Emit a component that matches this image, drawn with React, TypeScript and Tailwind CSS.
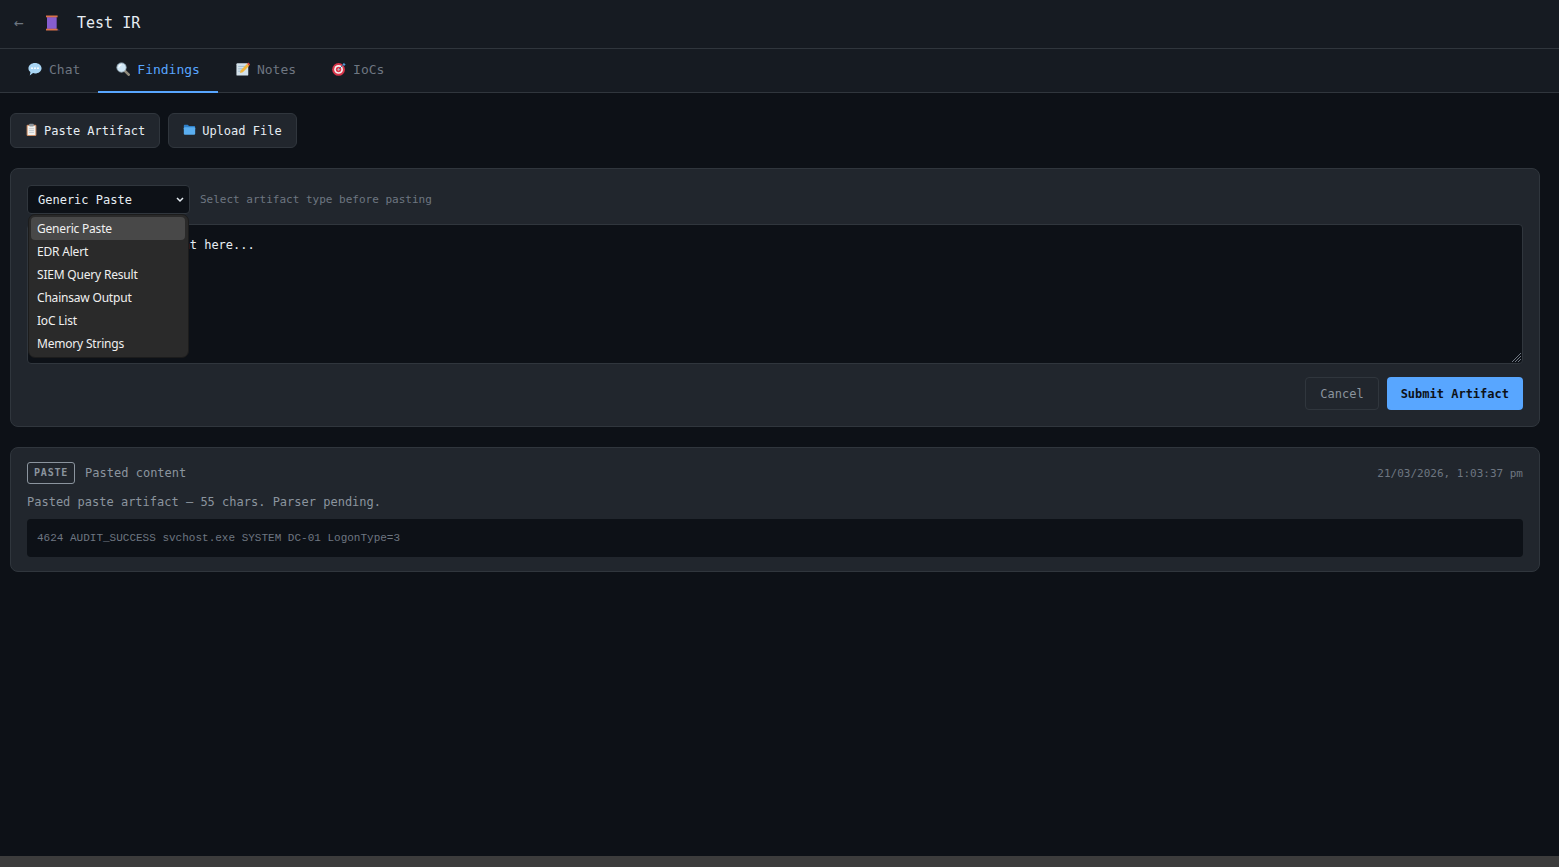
import type { ReactNode } from 'react'

const MONO = 'font-["DejaVu_Sans_Mono",monospace]'

// ---------------------------------------------------------------------------
// Emoji-style glyphs, drawn so they match the reference's emoji font
// ---------------------------------------------------------------------------

function Glyph({ size = 14, children }: { size?: number; children: ReactNode }) {
  return (
    <svg width={size} height={size} viewBox="0 0 16 16" className="mb-[2px] shrink-0">
      {children}
    </svg>
  )
}

const SpeechIcon = () => (
  <Glyph>
    <path d="M8 1c4 0 7.500 2.500 7.500 6s-3.500 6-7.500 6c-.8 0-1.500-.1-2.200-.3L2 15.500l.8-4C1.300 10.300.5 8.800.5 7 .5 3.500 4 1 8 1z" fill="#a9d6f5" />
    <circle cx="4.600" cy="7" r="1.100" fill="#ffffff" />
    <circle cx="8" cy="7" r="1.100" fill="#ffffff" />
    <circle cx="11.400" cy="7" r="1.100" fill="#ffffff" />
  </Glyph>
)

const SearchIcon = () => (
  <Glyph>
    <path d="M9.500 9.500l5 5" stroke="#8f8a7c" strokeWidth="3" strokeLinecap="round" />
    <circle cx="6.300" cy="6.300" r="5.300" fill="#cfe6f5" stroke="#9db2bf" strokeWidth="1" />
    <path d="M3.300 6c.2-1.500 1.200-2.500 2.700-2.800" stroke="#ffffff" strokeWidth="1.200" fill="none" strokeLinecap="round" />
  </Glyph>
)

const MemoIcon = () => (
  <Glyph>
    <rect x="0.500" y="1.500" width="13.500" height="14" rx="1" fill="#d3e1ea" />
    <path d="M2.500 5h9M2.500 7.800h9M2.500 10.500h5" stroke="#8fb0c6" strokeWidth="0.900" />
    <path d="M4.500 12.500l1-3.200 7.300-7.300 2.300 2.300-7.300 7.300z" fill="#f2b63c" />
    <path d="M12.800 2l1.300-1.300 2.200 2.200L15 4.300z" fill="#d9413a" />
  </Glyph>
)

const TargetIcon = () => (
  <Glyph>
    <circle cx="7.500" cy="8.500" r="7.300" fill="#d8354a" />
    <circle cx="7.500" cy="8.500" r="5" fill="#f4f1f0" />
    <circle cx="7.500" cy="8.500" r="3.100" fill="#d8354a" />
    <circle cx="7.500" cy="8.500" r="1.100" fill="#f4f1f0" />
    <path d="M7.500 8.500L13 3" stroke="#3f6f98" strokeWidth="1.100" />
    <path d="M12 2.500L14 .8l.4 1.600 1.300.3-1.900 2z" fill="#4b9bd6" />
  </Glyph>
)

const ClipboardIcon = () => (
  <Glyph size={13}>
    <rect x="2" y="2" width="12" height="14" rx="1.500" fill="#c98d66" />
    <rect x="3.300" y="3.500" width="9.400" height="11.300" fill="#f1f1ee" />
    <path d="M5 7h6M5 9.300h6M5 11.600h6" stroke="#b6bfc6" strokeWidth="0.900" />
    <rect x="5.300" y="0.800" width="5.400" height="3.400" rx="0.800" fill="#8d959c" />
  </Glyph>
)

const FolderIcon = () => (
  <Glyph size={13}>
    <path d="M1 3.500c0-.8.600-1.400 1.400-1.400h3.400l1.700 1.700h6.100c.8 0 1.400.6 1.400 1.400V8H1z" fill="#2f80c9" />
    <rect x="1" y="5.200" width="14" height="9.300" rx="1.400" fill="#5aaef0" />
  </Glyph>
)

const TABS = [
  { icon: <SpeechIcon />, label: 'Chat' },
  { icon: <SearchIcon />, label: 'Findings', active: true },
  { icon: <MemoIcon />, label: 'Notes' },
  { icon: <TargetIcon />, label: 'IoCs' },
]

const ACTIONS = [
  { icon: <ClipboardIcon />, label: 'Paste Artifact' },
  { icon: <FolderIcon />, label: 'Upload File' },
]

const ARTIFACT_TYPES = ['Generic Paste', 'EDR Alert', 'SIEM Query Result', 'Chainsaw Output', 'IoC List', 'Memory Strings']

function TypeMenu() {
  return (
    <div className="absolute top-[29px] left-[1px] z-10 w-[161px] rounded-[7px] border border-[#1c1c1c] bg-[#2a2a2a] py-[2px] pr-[3px] pl-[2px] font-['Noto_Sans',sans-serif] text-[12px] text-[#f0f0f0]">
      {ARTIFACT_TYPES.map((type, i) => (
        <div
          key={type}
          className={`flex h-[23px] items-center rounded-[4px] px-[6px] tracking-[-0.2px] ${i === 0 ? 'bg-[#484848]' : ''}`}
        >
          {type}
        </div>
      ))}
    </div>
  )
}

export default function App() {
  return (
    <div className={`flex h-screen flex-col overflow-hidden bg-[#0d1117] ${MONO}`}>
      {/* Header */}
      <header className="flex h-[49px] shrink-0 items-center border-b border-[#30363d] bg-[#161b22] pb-[2px] pl-[14px]">
        <span className="w-[31px] text-[16px] text-[#6e7681]">←</span>
        <span className="w-[32px]">
          <svg width="16" height="16" viewBox="0 0 16 16">
            <path d="M11 14.500c1.500.7 2.500.2 3.500.8" stroke="#3d3566" strokeWidth="1" fill="none" />
            <rect x="2" y="2" width="9.600" height="12" fill="#7a4fc4" />
            <path d="M2 4h9.600M2 6h9.600M2 8h9.600M2 10h9.600M2 12h9.600" stroke="#9a74e0" strokeWidth="0.800" />
            <rect x="1" y="0.500" width="11.600" height="1.800" fill="#d9734a" />
            <rect x="1" y="13.700" width="11.600" height="1.800" fill="#d9734a" />
          </svg>
        </span>
        <span className="text-[15px] text-[#e6edf3]">Test IR</span>
      </header>

      {/* Tabs */}
      <nav className="flex h-[44px] shrink-0 border-b border-[#30363d] bg-[#161b22] pl-[10px]">
        {TABS.map((tab) => (
          <div
            key={tab.label}
            className={`-mb-px flex h-[44px] items-center gap-[7px] border-b-2 px-[18px] text-[13px] ${
              tab.active ? 'border-[#58a6ff] text-[#58a6ff]' : 'border-transparent text-[#6e7681]'
            }`}
          >
            {tab.icon}
            {tab.label}
          </div>
        ))}
      </nav>

      <main className="flex flex-1 flex-col gap-[20px] pt-[20px] pr-[19px] pl-[10px]">
        {/* Actions */}
        <div className="flex gap-2">
          {ACTIONS.map((btn) => (
            <button
              key={btn.label}
              className="flex h-[35px] items-center gap-[6px] rounded-md border border-[#30363d] bg-[#21262d] px-[14px] text-[12px] text-[#e6edf3]"
            >
              {btn.icon}
              {btn.label}
            </button>
          ))}
        </div>

        {/* Paste form */}
        <section className="rounded-lg border border-[#30363d] bg-[#21262d] p-4">
          <div className="flex items-center gap-[10px]">
            <div className="relative">
              <select className="h-[29px] w-[163px] appearance-none rounded-[4px] border border-[#30363d] bg-[#0d1117] pl-[10px] text-[12px] text-[#e6edf3]">
                <option>Generic Paste</option>
              </select>
              <svg width="8" height="6" viewBox="0 0 8 6" className="absolute top-[12px] left-[149px]">
                <path d="M1 1l3 3 3-3" stroke="#e6edf3" strokeWidth="1.500" fill="none" />
              </svg>
              <TypeMenu />
            </div>
            <span className="pt-[2px] text-[11px] text-[#6e7681]">Select artifact type before pasting</span>
          </div>
          <div className="relative mt-[10px]">
            <textarea
              className="block h-[140px] w-full resize-none rounded-[4px] border border-[#30363d] bg-[#0d1117] px-[10px] py-[12px] text-[12px] leading-[16px] text-[#e6edf3] outline-none placeholder:text-[#e6edf3]"
              placeholder="Paste artifact content here..."
            />
            <svg width="11" height="11" viewBox="0 0 11 11" className="pointer-events-none absolute right-[1px] bottom-[1px]">
              <path d="M10 1L1 10M10 4L4 10M10 7L7 10" stroke="#6e7681" strokeWidth="1" />
            </svg>
          </div>
          <div className="mt-[13px] flex justify-end gap-2">
            <button className="h-[33px] rounded-[4px] border border-[#30363d] px-[14px] text-[12px] text-[#8b949e]">
              Cancel
            </button>
            <button className="h-[33px] rounded-[4px] bg-[#58a6ff] px-[14px] text-[12px] font-bold text-[#0d1117]">
              Submit Artifact
            </button>
          </div>
        </section>

        {/* Artifact card */}
        <section className="rounded-lg border border-[#30363d] bg-[#21262d] px-4 py-[14px]">
          <div className="flex items-center justify-between">
            <div className="flex items-center gap-[10px]">
              <span className="flex h-[22px] items-center rounded-[3px] border border-[#8b949e] px-[6px] pb-[2px] text-[10px] font-bold tracking-[0.8px] text-[#8b949e]">
                PASTE
              </span>
              <span className="text-[12px] text-[#8b949e]">Pasted content</span>
            </div>
            <span className="pt-[2px] text-[11px] text-[#6e7681]">21/03/2026, 1:03:37 pm</span>
          </div>
          <p className="mt-[9px] text-[12px] leading-[18px] text-[#8b949e]">
            Pasted paste artifact — 55 chars. Parser pending.
          </p>
          <div className="mt-[8px] flex h-[38px] items-center rounded-[4px] bg-[#0d1117] px-[10px] font-['Liberation_Mono',monospace] text-[11px] text-[#6e7681]">
            4624 AUDIT_SUCCESS svchost.exe SYSTEM DC-01 LogonType=3
          </div>
        </section>
      </main>

      {/* Scrollbar strip */}
      <div className="h-[11px] shrink-0 bg-[#3c3c3c]" />
    </div>
  )
}
